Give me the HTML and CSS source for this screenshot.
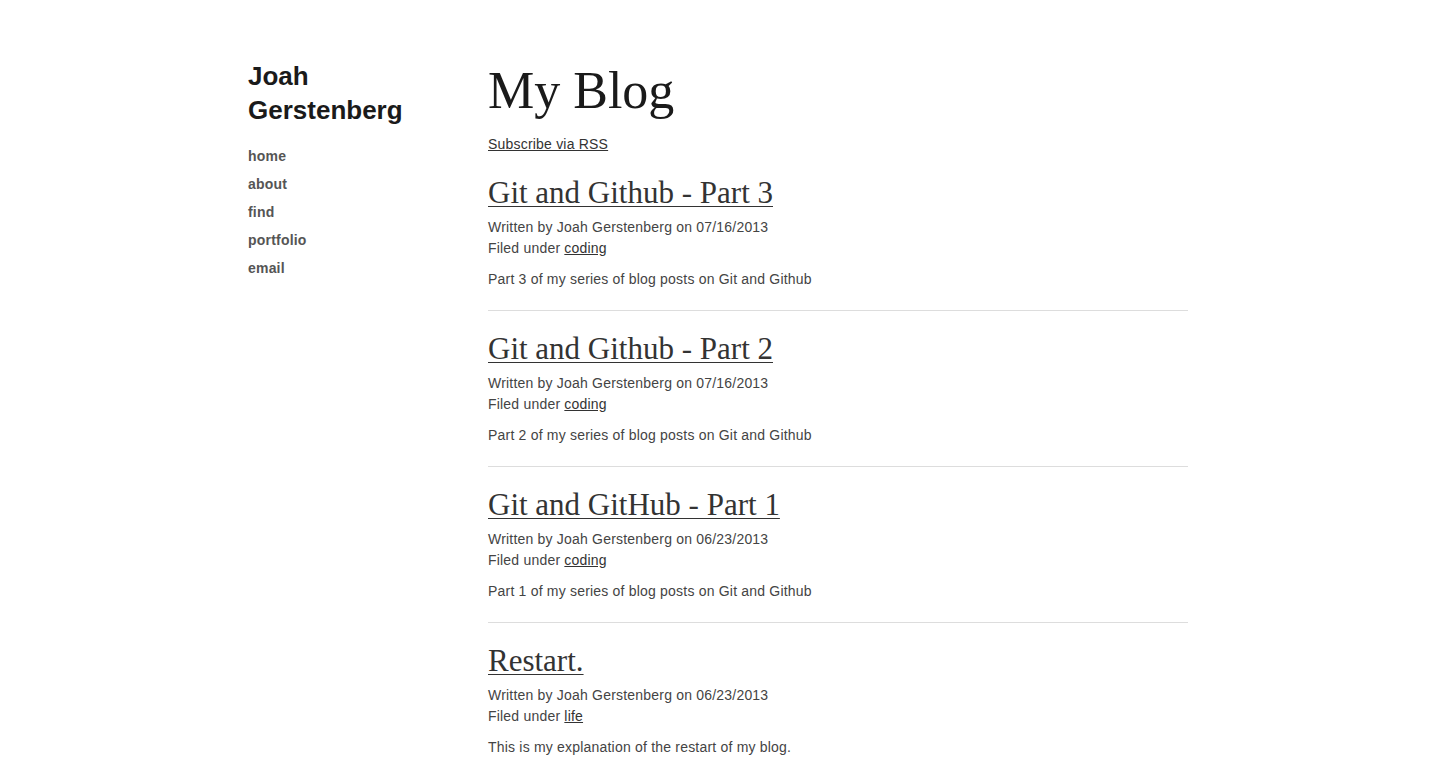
FILE: index.html
```html
<!DOCTYPE html>
<html>
<head>
<meta charset="utf-8">
<title>My Blog</title>
<link rel="stylesheet" href="styles.css">
</head>
<body>
<div class="container">
  <aside class="sidebar">
    <h1 class="name">Joah<br>Gerstenberg</h1>
    <nav class="nav">
      <a href="#">home</a>
      <a href="#">about</a>
      <a href="#">find</a>
      <a href="#">portfolio</a>
      <a href="#">email</a>
    </nav>
  </aside>
  <main class="main">
    <h1 class="page-title">My Blog</h1>
    <a class="rss" href="#">Subscribe via RSS</a>
    <article class="post">
      <h2 class="post-title"><a href="#">Git and Github - Part 3</a></h2>
      <p class="meta">Written by Joah Gerstenberg on 07/16/2013<br>Filed under <a href="#">coding</a></p>
      <p class="excerpt">Part 3 of my series of blog posts on Git and Github</p>
    </article>
    <article class="post">
      <h2 class="post-title"><a href="#">Git and Github - Part 2</a></h2>
      <p class="meta">Written by Joah Gerstenberg on 07/16/2013<br>Filed under <a href="#">coding</a></p>
      <p class="excerpt">Part 2 of my series of blog posts on Git and Github</p>
    </article>
    <article class="post">
      <h2 class="post-title"><a href="#">Git and GitHub - Part 1</a></h2>
      <p class="meta">Written by Joah Gerstenberg on 06/23/2013<br>Filed under <a href="#">coding</a></p>
      <p class="excerpt">Part 1 of my series of blog posts on Git and Github</p>
    </article>
    <article class="post">
      <h2 class="post-title"><a href="#">Restart.</a></h2>
      <p class="meta">Written by Joah Gerstenberg on 06/23/2013<br>Filed under <a href="#">life</a></p>
      <p class="excerpt">This is my explanation of the restart of my blog.</p>
    </article>
  </main>
</div>
</body>
</html>
```

FILE: styles.css
```css
html, body {
  margin: 0;
  padding: 0;
  background: #fff;
}
body {
  font-family: "Liberation Sans", Arial, sans-serif;
  font-size: 14px;
  letter-spacing: 0.2px;
  color: #444;
}
.container {
  width: 940px;
  margin: 0 auto;
  padding-top: 59px;
  display: flex;
}
.sidebar {
  width: 240px;
  flex: none;
}
.name {
  margin: 0;
  font-size: 26px;
  line-height: 34px;
  font-weight: bold;
  color: #1a1a1a;
  letter-spacing: 0;
}
.nav {
  display: flex;
  flex-direction: column;
  margin-top: 15px;
}
.nav a {
  font-weight: bold;
  font-size: 14px;
  line-height: 28px;
  color: #555;
  text-decoration: none;
}
.main {
  width: 700px;
  flex: none;
}
.page-title {
  margin: 0;
  font-family: "Liberation Serif", "Times New Roman", serif;
  font-weight: normal;
  font-size: 52px;
  line-height: 64px;
  letter-spacing: 0;
  color: #1a1a1a;
}
.rss {
  display: block;
  margin-top: 11px;
  line-height: 21px;
  color: #333;
}
.post {
  padding-top: 20px;
  padding-bottom: 20px;
  border-bottom: 1px solid #ddd;
}
.post:last-child {
  border-bottom: none;
}
.post-title {
  margin: 0;
  font-family: "Liberation Serif", "Times New Roman", serif;
  font-weight: normal;
  font-size: 31px;
  line-height: 36px;
  letter-spacing: 0;
}
.post-title a {
  color: #333;
  text-decoration-thickness: 1px;
  text-underline-offset: 3px;
}
.meta {
  margin: 6px 0 0;
  line-height: 21px;
  color: #444;
}
.meta a {
  color: #333;
}
.excerpt {
  margin: 10px 0 0;
  line-height: 21px;
  color: #444;
}
```
